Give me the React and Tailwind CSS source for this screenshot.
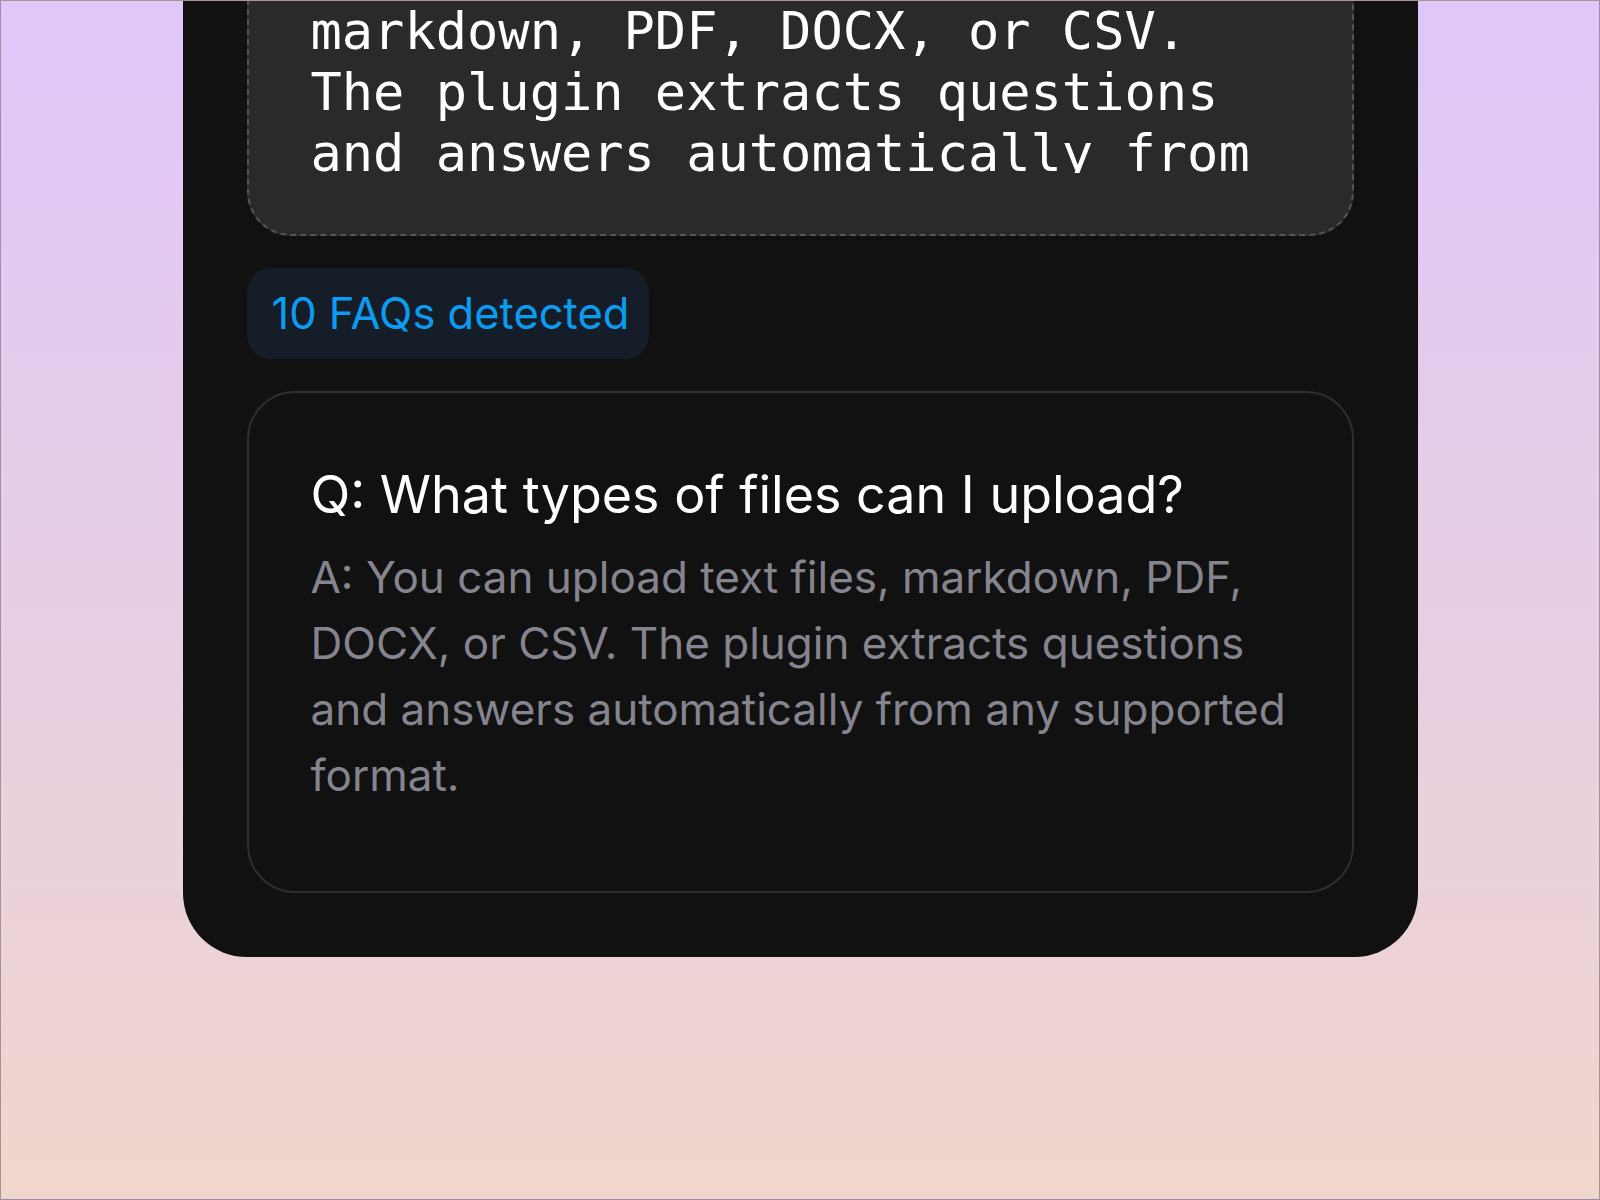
import React from 'react';

const sourceLines = [
    "Q: What types of files can I",
    "upload?",
    "A: You can upload text files,",
    "markdown, PDF, DOCX, or CSV.",
    "The plugin extracts questions",
    "and answers automatically from",
    "any supported format.",
];

export default function App() {
    return (
        <div className="h-[1200px] w-full overflow-hidden border border-black/30 bg-gradient-to-b from-[#e0c6fa] to-[#f0d6cc] flex justify-center">
            {/* card is scrolled, top part sits above the viewport */}
            <div className="-mt-[297px] w-[1235px] self-start rounded-[64px] bg-[#111111] p-16 flex flex-col">
                <div className="rounded-[44px] border-2 border-dashed border-[#555555] bg-[#2a2a2a] pl-[62px] pr-16 pt-12 pb-[61px]">
                    <div className="h-[355px] overflow-hidden text-[52px] leading-[61px] text-white font-['DejaVu_Sans_Mono',monospace] whitespace-pre">
                        {sourceLines.map((line, i) => (
                            <div key={i}>{line}</div>
                        ))}
                    </div>
                </div>

                <div className="mt-[32px] self-start rounded-[24px] bg-[#151e28] pl-[25px] pr-[20px] h-[91px] flex items-center">
                    <span className="text-[43.5px] text-[#0b9cf2] font-['Inter',sans-serif]">10 FAQs detected</span>
                </div>

                <div className="mt-[32px] rounded-[48px] border-2 border-[#2f2f2f] pl-[62px] pr-[56px] pt-[66px] pb-[83px] font-['Inter',sans-serif]">
                    <h3 className="text-[52px] leading-[72px] text-white">Q: What types of files can I upload?</h3>
                    <p className="mt-[13px] text-[44px] leading-[66px] text-[#85848f]">
                        A: You can upload text files, markdown, PDF, DOCX, or CSV. The plugin extracts questions and answers automatically from any supported format.
                    </p>
                </div>
            </div>
        </div>
    );
}
